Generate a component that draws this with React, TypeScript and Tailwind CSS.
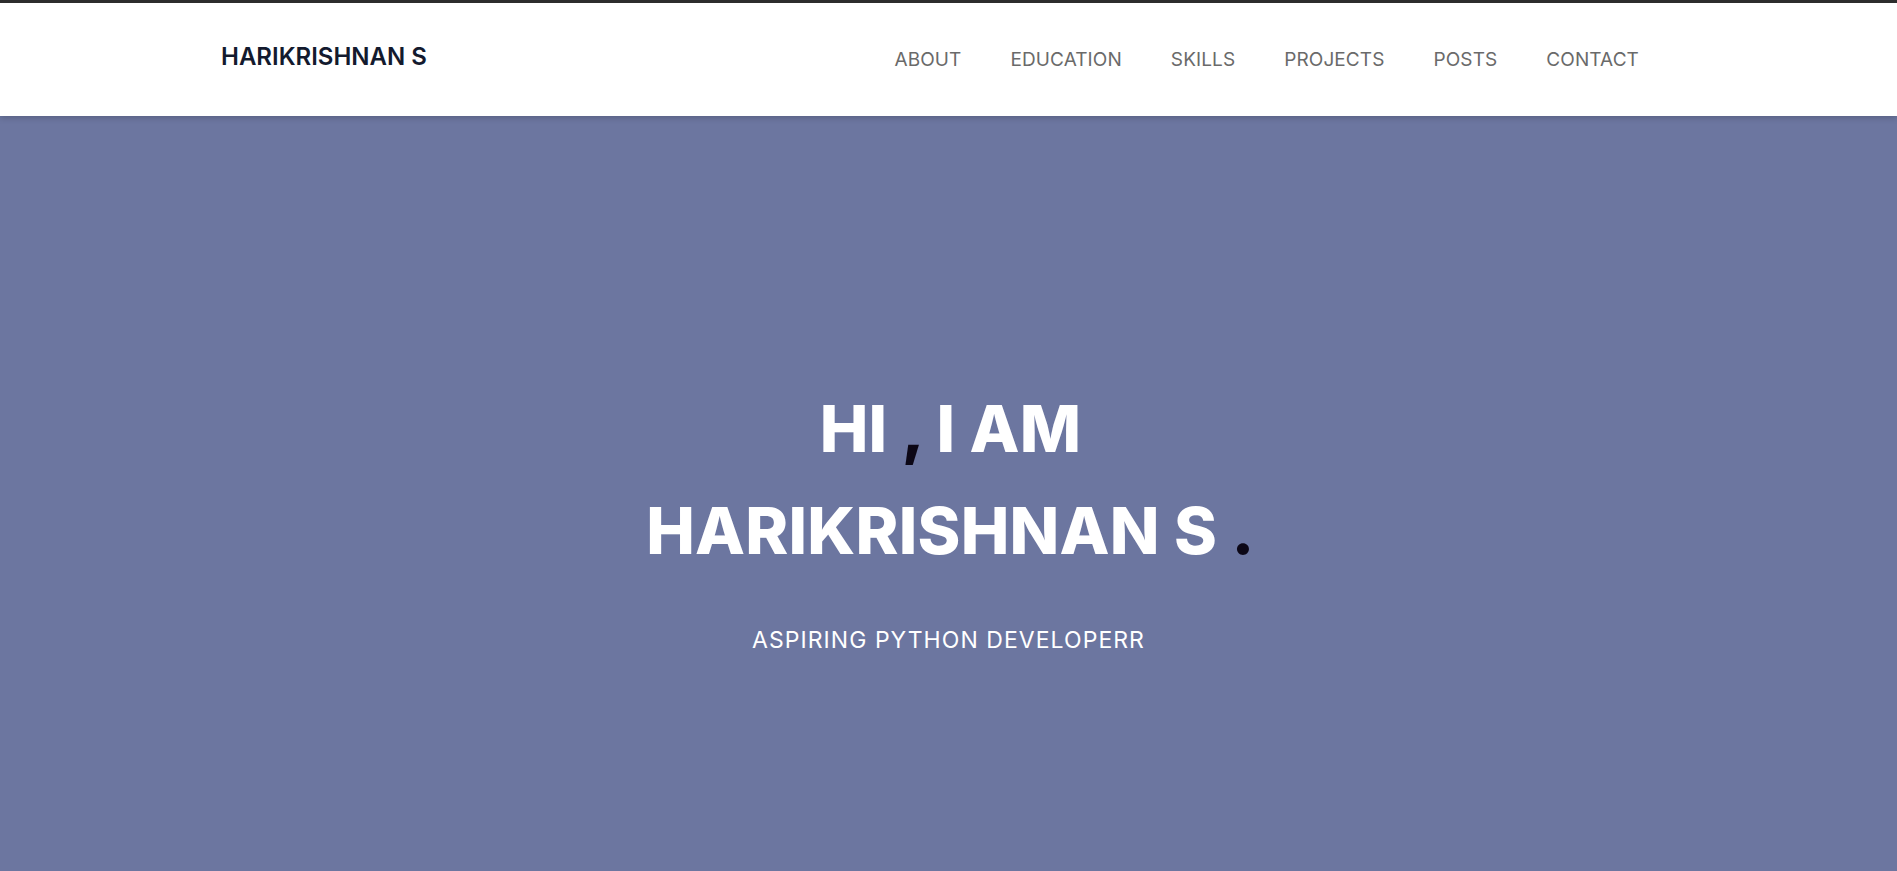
import React from "react";

export default function App() {
  const nav = ["ABOUT", "EDUCATION", "SKILLS", "PROJECTS", "POSTS", "CONTACT"];
  return (
    <div className="min-h-screen w-full bg-[#6c76a0] font-['Inter',sans-serif]">
      <header className="relative z-10 border-t-[3px] border-[#2d2d2d] bg-white shadow-[0_2px_6px_rgba(0,0,0,0.18)]">
        <div className="flex h-[113px] items-center justify-between pl-[221px] pr-[258px]">
          <div className="mt-[-6px] text-[24px] font-semibold text-[#131a2e]">
            HARIKRISHNAN S
          </div>
          <nav className="flex items-center gap-[49px] text-[19px] tracking-[0.1px] text-[#6a6a6a]">
            {nav.map((n) => (
              <a key={n} href="#" className="leading-none">
                {n}
              </a>
            ))}
          </nav>
        </div>
      </header>
      <section className="flex flex-col items-center pt-[262px] pb-[220px] text-center text-white">
        <h1 className="ml-[4px] text-[65px] font-extrabold leading-[102px] tracking-[0.2px]">
          <span>HI</span>
          <span className="text-[#0c0716]"> , </span>
          <span>I AM</span>
          <br />
          <span>HARIKRISHNAN S</span>
          <span className="text-[#0c0716]"> .</span>
        </h1>
        <p className="mt-[41px] text-[23px] tracking-[1.05px] text-white">
          ASPIRING PYTHON DEVELOPERR
        </p>
      </section>
    </div>
  );
}
